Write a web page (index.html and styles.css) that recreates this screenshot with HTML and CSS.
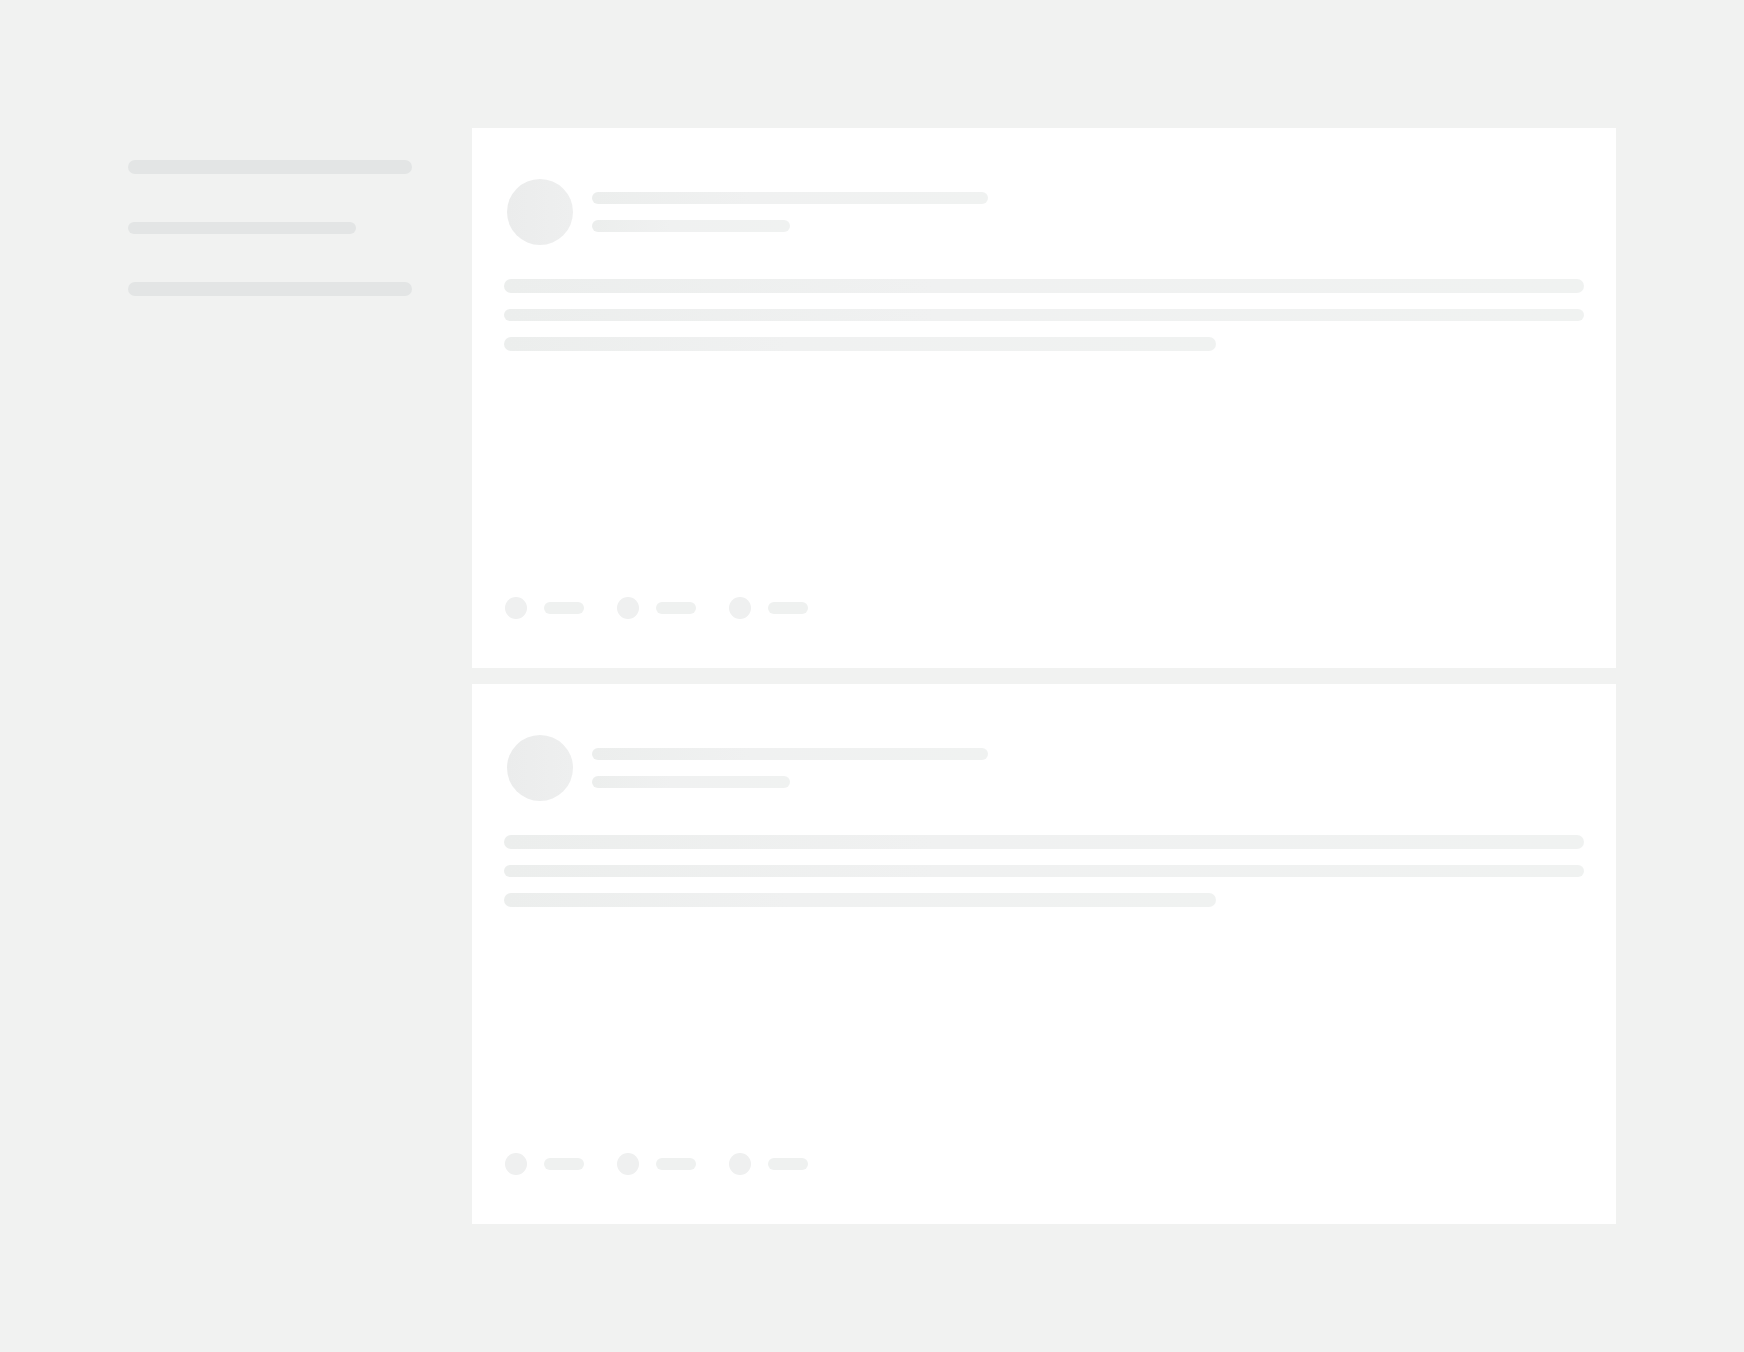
FILE: index.html
```html
<!DOCTYPE html>
<html lang="en">
<head>
<meta charset="utf-8">
<title>Loading</title>
<link rel="stylesheet" href="styles.css">
</head>
<body>
<div class="page">
  <aside class="sidebar">
    <div class="sk-bar sk-bar--full"></div>
    <div class="sk-bar sk-bar--short sk-bar--thin"></div>
    <div class="sk-bar sk-bar--full"></div>
  </aside>
  <main class="feed">
    <article class="card">
      <div class="card-header">
        <div class="avatar-box"><div class="avatar"></div></div>
        <div class="meta">
          <div class="sk-line sk-line--title"></div>
          <div class="sk-line sk-line--sub"></div>
        </div>
      </div>
      <div class="card-body">
        <div class="sk-line sk-line--body"></div>
        <div class="sk-line sk-line--body sk-line--thin"></div>
        <div class="sk-line sk-line--body sk-line--part"></div>
      </div>
      <div class="card-footer">
        <div class="action"><div class="dot-box"><div class="dot"></div></div><div class="pill"></div></div>
        <div class="action"><div class="dot-box"><div class="dot"></div></div><div class="pill"></div></div>
        <div class="action"><div class="dot-box"><div class="dot"></div></div><div class="pill"></div></div>
      </div>
    </article>
    <article class="card">
      <div class="card-header">
        <div class="avatar-box"><div class="avatar"></div></div>
        <div class="meta">
          <div class="sk-line sk-line--title"></div>
          <div class="sk-line sk-line--sub"></div>
        </div>
      </div>
      <div class="card-body">
        <div class="sk-line sk-line--body"></div>
        <div class="sk-line sk-line--body sk-line--thin"></div>
        <div class="sk-line sk-line--body sk-line--part"></div>
      </div>
      <div class="card-footer">
        <div class="action"><div class="dot-box"><div class="dot"></div></div><div class="pill"></div></div>
        <div class="action"><div class="dot-box"><div class="dot"></div></div><div class="pill"></div></div>
        <div class="action"><div class="dot-box"><div class="dot"></div></div><div class="pill"></div></div>
      </div>
    </article>
  </main>
</div>
</body>
</html>
```
FILE: styles.css
```css
* { box-sizing: border-box; }
html, body { margin: 0; padding: 0; }
body {
  background: #f1f2f1;
  font-family: "Liberation Sans", Arial, sans-serif;
  min-height: 1352px;
}
.page {
  padding: 128px;
  display: grid;
  grid-template-columns: 284px 1fr;
  column-gap: 60px;
}
.sidebar {
  padding-top: 32px;
  display: flex;
  flex-direction: column;
  gap: 48px;
}
.sk-bar {
  height: 14px;
  border-radius: 7px;
  background: #e3e5e5;
}
.sk-bar--full { width: 100%; }
.sk-bar--short { width: 228px; }
.sk-bar--thin { height: 12px; border-radius: 6px; }

.feed {
  display: flex;
  flex-direction: column;
  gap: 16px;
}
.card {
  background: #ffffff;
  height: 540px;
  padding: 48px 32px;
  display: flex;
  flex-direction: column;
}
.card-header {
  display: flex;
  align-items: center;
  gap: 16px;
  height: 72px;
}
.avatar-box {
  width: 72px;
  height: 72px;
  flex: none;
  display: flex;
  align-items: center;
  justify-content: center;
}
.avatar {
  width: 66px;
  height: 66px;
  border-radius: 50%;
  background: linear-gradient(90deg, #ebecec, #eeefef);
}
.meta {
  flex: 1;
  display: flex;
  flex-direction: column;
  gap: 16px;
}
.sk-line {
  height: 12px;
  border-radius: 6px;
  background: linear-gradient(90deg, #eceeed 0%, #f0f1f1 40%, #f0f2f1 100%);
}
.sk-line--title { width: 396px; }
.sk-line--sub { width: 198px; }
.card-body {
  margin-top: 31px;
  display: flex;
  flex-direction: column;
  gap: 16px;
}
.sk-line--body { width: 100%; height: 14px; border-radius: 7px; }
.sk-line--thin { height: 12px; border-radius: 6px; }
.sk-line--part { width: 712px; }
.card-footer {
  margin-top: auto;
  display: flex;
  align-items: center;
  gap: 32px;
  height: 24px;
}
.action {
  display: flex;
  align-items: center;
  gap: 16px;
}
.dot-box {
  width: 24px;
  height: 24px;
  display: flex;
  align-items: center;
  justify-content: center;
}
.dot {
  width: 22px;
  height: 22px;
  border-radius: 50%;
  background: #eff0f0;
}
.pill {
  width: 40px;
  height: 12px;
  border-radius: 6px;
  background: #eff1f0;
}
```
